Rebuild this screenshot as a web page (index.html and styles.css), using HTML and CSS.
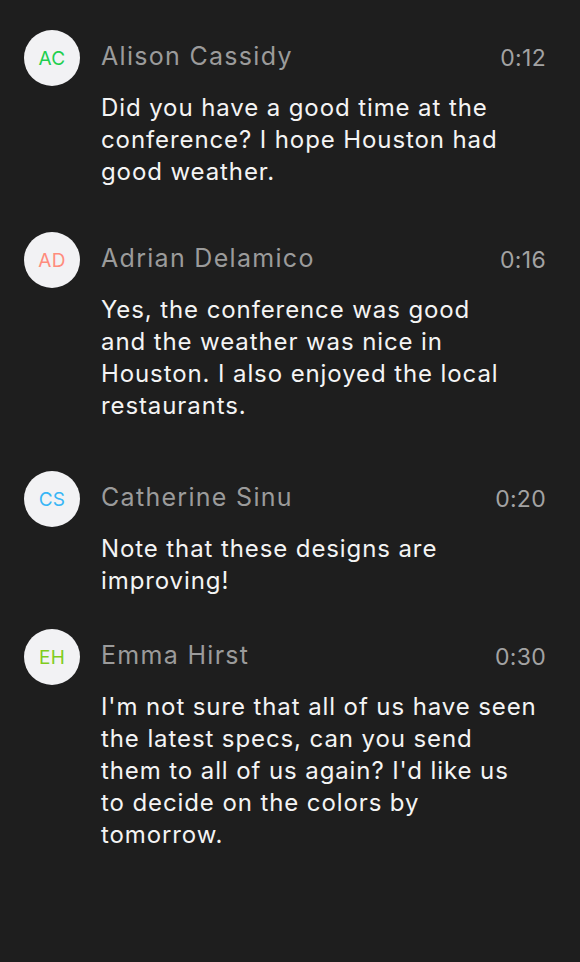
FILE: index.html
```html
<!DOCTYPE html>
<html lang="en">
<head>
<meta charset="utf-8">
<title>Messages</title>
<link rel="stylesheet" href="styles.css">
</head>
<body>
<main class="thread">
  <article class="msg msg--a">
    <div class="avatar avatar--green">AC</div>
    <div class="msg-body">
      <header class="msg-head">
        <span class="msg-name">Alison Cassidy</span>
        <span class="msg-time">0:12</span>
      </header>
      <p class="msg-text">Did you have a good time at the conference? I hope Houston had good weather.</p>
    </div>
  </article>
  <article class="msg msg--b">
    <div class="avatar avatar--salmon">AD</div>
    <div class="msg-body">
      <header class="msg-head">
        <span class="msg-name">Adrian Delamico</span>
        <span class="msg-time">0:16</span>
      </header>
      <p class="msg-text">Yes, the conference was good and the weather was nice in Houston. I also enjoyed the local restaurants.</p>
    </div>
  </article>
  <article class="msg msg--c">
    <div class="avatar avatar--blue">CS</div>
    <div class="msg-body">
      <header class="msg-head">
        <span class="msg-name">Catherine Sinu</span>
        <span class="msg-time">0:20</span>
      </header>
      <p class="msg-text">Note that these designs are improving!</p>
    </div>
  </article>
  <article class="msg msg--d">
    <div class="avatar avatar--lime">EH</div>
    <div class="msg-body">
      <header class="msg-head">
        <span class="msg-name">Emma Hirst</span>
        <span class="msg-time">0:30</span>
      </header>
      <p class="msg-text">I'm not sure that all of us have seen the latest specs, can you send them to all of us again? I'd like us to decide on the colors by tomorrow.</p>
    </div>
  </article>
</main>
</body>
</html>
```

FILE: styles.css
```css
html, body {
  margin: 0;
  padding: 0;
  background: #1e1e1e;
}
body {
  font-family: Inter, "Noto Sans", sans-serif;
  -webkit-font-smoothing: antialiased;
}
.thread {
  display: flex;
  flex-direction: column;
  padding: 30px 34px 0 24px;
}
.msg {
  display: flex;
  gap: 21px;
  align-items: flex-start;
}
.msg--a { padding-bottom: 44px; }
.msg--b { padding-bottom: 49px; }
.msg--c { padding-bottom: 32px; }
.avatar {
  flex: 0 0 56px;
  width: 56px;
  height: 56px;
  border-radius: 50%;
  background: #f2f2f4;
  display: flex;
  align-items: center;
  justify-content: center;
  font-size: 19px;
  letter-spacing: 0.3px;
}
.avatar--green { color: #1fcf4f; }
.avatar--salmon { color: #ff8c7c; }
.avatar--blue { color: #38b6f6; }
.avatar--lime { color: #80cc1c; }
.msg-body {
  flex: 1;
  min-width: 0;
}
.msg-head {
  display: flex;
  justify-content: space-between;
  align-items: center;
  height: 52px;
  margin-bottom: 10px;
}
.msg-name {
  font-size: 25px;
  letter-spacing: 1.3px;
  color: #9b9b9b;
}
.msg-time {
  font-size: 23px;
  letter-spacing: 0.3px;
  color: #a3a3a3;
  padding-top: 4px;
}
.msg-text {
  margin: 0;
  font-size: 24px;
  line-height: 32px;
  letter-spacing: 0.9px;
  color: #f4f4f4;
  max-width: 432px;
}
.msg--b .msg-text { max-width: 408px; }
.msg--d .msg-text { max-width: 437px; }
```
